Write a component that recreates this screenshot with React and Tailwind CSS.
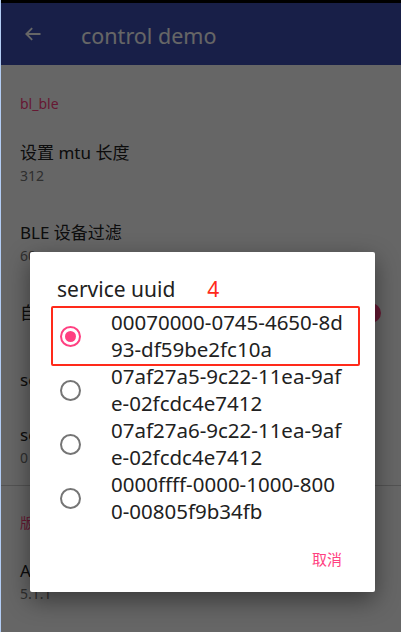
import React from 'react';

const font = { fontFamily: '"Noto Sans", "Noto Sans CJK SC", sans-serif' };

const options = [
  ['00070000-0745-4650-8d', '93-df59be2fc10a'],
  ['07af27a5-9c22-11ea-9af', 'e-02fcdc4e7412'],
  ['07af27a6-9c22-11ea-9af', 'e-02fcdc4e7412'],
  ['0000ffff-0000-1000-800', '0-00805f9b34fb'],
];

const Pref = ({ title, summary, right }) => (
  <div className="flex items-center justify-between pl-[19px] pr-[22px]">
    <div className="flex flex-col">
      <span className="text-[17px] leading-[24px] text-[#212121]">{title}</span>
      {summary && <span className="text-[14px] leading-[22px] text-[#757575]">{summary}</span>}
    </div>
    {right}
  </div>
);

const Radio = ({ checked }) => (
  <div
    className={`w-[21px] h-[21px] rounded-full border-2 flex items-center justify-center shrink-0 ${
      checked ? 'border-[#ff4081]' : 'border-[#757575]'
    }`}
  >
    {checked && <div className="w-[11px] h-[11px] rounded-full bg-[#ff4081]" />}
  </div>
);

export default function App() {
  return (
    <div className="relative w-[401px] h-[632px] overflow-hidden bg-white border-l border-[#b3cdf5]" style={font}>
      {/* status + app bar */}
      <div className="h-[3px] bg-black" />
      <div className="h-[62px] bg-[#3c4eb4] flex items-center pl-[22px]">
        <svg width="20" height="20" viewBox="0 0 24 24" fill="none" stroke="white" strokeWidth="2.2">
          <path d="M21 12H4M11 5l-7 7 7 7" />
        </svg>
        <span className="ml-[38px] pt-[4px] text-[21.5px] text-white leading-none">control demo</span>
      </div>

      {/* preferences */}
      <div className="flex flex-col">
        <div className="pl-[19px] pt-[29px] pb-[27px] text-[14px] leading-[20px] text-[#ff4081]">bl_ble</div>
        <Pref title="设置 mtu 长度" summary="312" />
        <div className="h-[34px]" />
        <Pref title="BLE 设备过滤" summary="60" />
        <div className="h-[34px]" />
        <Pref
          title="自动连接"
          right={
            <div className="relative w-[36px] h-[14px] rounded-full bg-[#ff80ab]">
              <div className="absolute -top-[3px] right-[-2px] w-[20px] h-[20px] rounded-full bg-[#ff4081]" />
            </div>
          }
        />
        <div className="h-[43px]" />
        <Pref title="scan timeout" />
        <div className="h-[31px]" />
        <Pref title="scan period" summary="0" />
        <div className="h-[16px]" />
        <div className="h-px bg-[#d0d0d0]" />
        <div className="pl-[19px] pt-[27px] pb-[26px] text-[14px] leading-[20px] text-[#ff4081]">版本</div>
        <Pref title="App version" summary="5.1.1" />
      </div>

      {/* scrim */}
      <div className="absolute inset-0 bg-black/60" />

      {/* dialog */}
      <div className="absolute left-[29px] top-[252px] w-[345px] h-[340px] bg-white rounded-[2px] shadow-[0_8px_24px_rgba(0,0,0,0.45)] flex flex-col">
        <div className="flex items-center pl-[27px] pt-[23px]">
          <span className="text-[21px] leading-[28px] text-[#212121]">service uuid</span>
          <span className="ml-[32px] text-[21px] leading-[28px] text-[#ff2a1a]">4</span>
        </div>
        <div className="flex flex-col mt-[6px]">
          {options.map((lines, i) => (
            <div key={i} className="relative flex items-center h-[54px]">
              <div className="pl-[30px] w-[81px]">
                <Radio checked={i === 0} />
              </div>
              <div className="flex flex-col text-[20.5px] leading-[27px] text-[#212121]">
                <span>{lines[0]}</span>
                <span>{lines[1]}</span>
              </div>
              {i === 0 && (
                <div className="absolute -top-[3px] -bottom-[3px] left-[21px] right-[15px] border-2 border-[#ff2a1a] rounded-[2px]" />
              )}
            </div>
          ))}
        </div>
        <div className="flex justify-end pr-[33px] mt-[23px]">
          <span className="text-[15px] leading-[22px] text-[#ff4081]">取消</span>
        </div>
      </div>
    </div>
  );
}
